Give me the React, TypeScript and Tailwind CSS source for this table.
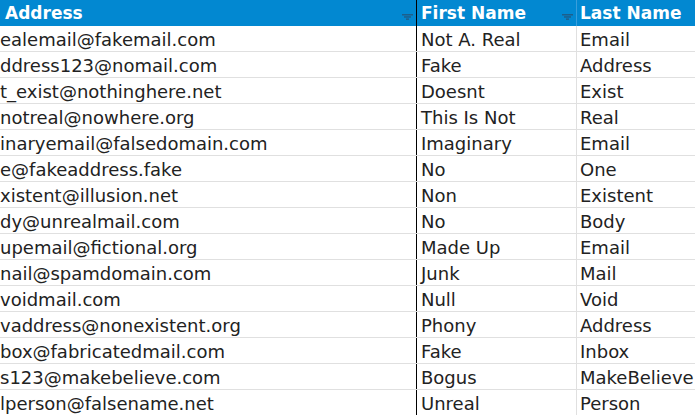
const rows = [
  ["ealemail@fakemail.com", "Not A. Real", "Email"],
  ["ddress123@nomail.com", "Fake", "Address"],
  ["t_exist@nothinghere.net", "Doesnt", "Exist"],
  ["notreal@nowhere.org", "This Is Not", "Real"],
  ["inaryemail@falsedomain.com", "Imaginary", "Email"],
  ["e@fakeaddress.fake", "No", "One"],
  ["xistent@illusion.net", "Non", "Existent"],
  ["dy@unrealmail.com", "No", "Body"],
  ["upemail@fictional.org", "Made Up", "Email"],
  ["nail@spamdomain.com", "Junk", "Mail"],
  ["voidmail.com", "Null", "Void"],
  ["vaddress@nonexistent.org", "Phony", "Address"],
  ["box@fabricatedmail.com", "Fake", "Inbox"],
  ["s123@makebelieve.com", "Bogus", "MakeBelieve"],
  ["lperson@falsename.net", "Unreal", "Person"],
];

function FilterIcon() {
  return (
    <svg width="11" height="6" viewBox="0 0 11 6" className="ml-auto mt-[14px] shrink-0 self-start">
      <rect x="0" y="0" width="11" height="1.5" fill="#1d5f8c" />
      <rect x="2" y="2.2" width="7" height="1.5" fill="#1d5f8c" />
      <rect x="4" y="4.4" width="3" height="1.5" fill="#1d5f8c" />
    </svg>
  );
}

export default function App() {
  return (
    <div className="w-[695px] h-[415px] overflow-hidden bg-white text-[#222] font-['DejaVu_Sans',sans-serif] text-[18px]">
      {/* header */}
      <div className="flex h-[26px] bg-[#0288d1] text-white font-bold text-[17px] leading-none">
        <div className="w-[417px] flex items-center pl-[5px] pr-[3px] border-r border-black">
          <span>Address</span>
          <FilterIcon />
        </div>
        <div className="w-[160px] flex items-center pl-[4px] pr-[3px] border-r border-[#3a9edb]">
          <span>First Name</span>
          <FilterIcon />
        </div>
        <div className="flex-1 flex items-center pl-[3px] whitespace-nowrap">Last Name</div>
      </div>

      {rows.map((r, i) => (
        <div key={i} className="flex h-[26px] border-b border-[#e0e0e0] leading-none whitespace-nowrap">
          <div className="w-[417px] flex items-center pt-[2px] overflow-hidden border-r border-black">
            <span>{r[0]}</span>
          </div>
          <div className="w-[160px] flex items-center pt-[2px] pl-[4px] overflow-hidden border-r border-[#e0e0e0]">
            {r[1]}
          </div>
          <div className="flex-1 flex items-center pt-[2px] pl-[3px] overflow-hidden">{r[2]}</div>
        </div>
      ))}
    </div>
  );
}
